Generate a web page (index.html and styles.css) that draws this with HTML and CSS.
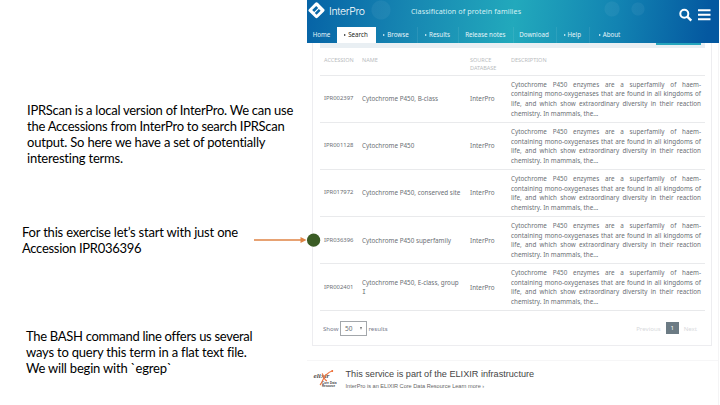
FILE: index.html
```
<!DOCTYPE html>
<html lang="en">
<head>
<meta charset="utf-8">
<title>InterPro accessions</title>
<link rel="stylesheet" href="styles.css">
</head>
<body>
<main class="slide">
  <section class="notes">
    <p class="note intro"><span class="tight">IPRScan is a local version of InterPro. We can use</span><br><span class="tight">the Accessions from InterPro to search IPRScan</span><br>output. So here we have a set of potentially<br>interesting terms.</p>
    <p class="note exercise">For this exercise let’s start with just one<br><span class="tighter">Accession IPR036396</span></p>
    <p class="note command"><span class="tighter">The BASH command line offers us several</span><br>ways to query this term in a flat text file.<br>We will begin with `egrep`</p>
  </section>
  <section class="site">
    <header class="masthead">
      <div class="brand-row">
        <svg class="logo" viewBox="0 0 17 17"><path fill="#fff" fill-rule="evenodd" d="M8.5 0.3Q9.2 0.3 10 1.1L16 7Q17.2 8.2 16 9.4L9.8 15.6Q8.5 16.8 7.2 15.6L1 9.6Q-.2 8.5 1 7.2L7.1 1.1Q7.8.3 8.5.3ZM8.2 4L4.2 8L6.2 10L10.2 6ZM10.8 7L6.8 11L8.6 12.8L12.6 8.8Z"/></svg>
        <span class="brand">InterPro</span>
        <span class="tagline">Classification of protein families</span>
        <svg class="tools" viewBox="0 0 32 14"><circle cx="5.3" cy="5.7" r="4" fill="none" stroke="#fff" stroke-width="2"/><path d="M8.3 8.7L12.3 12.7" stroke="#fff" stroke-width="2.4"/><path d="M19 2.3H31.5M19 6.8H31.5M19 11.3H31.5" stroke="#fff" stroke-width="2"/></svg>
      </div>
      <nav class="nav">
        <a>Home</a><a class="sub active">Search</a><a class="sub">Browse</a><a class="sub">Results</a><a>Release notes</a><a>Download</a><a class="sub">Help</a><a class="sub">About</a>
      </nav>
    </header>
    <div class="card">
      <div class="toolbar"><i class="export"></i></div>
      <div class="row head"><span>ACCESSION</span><span>NAME</span><span>SOURCE<br>DATABASE</span><span>DESCRIPTION</span></div>
      <div class="row"><span class="acc">IPR002397</span><span>Cytochrome P450, B-class</span><span>InterPro</span><div class="desc"><p>Cytochrome P450 enzymes are a superfamily of haem-</p><p>containing mono-oxygenases that are found in all kingdoms of</p><p>life, and which show extraordinary diversity in their reaction</p><p>chemistry. In mammals, the...</p></div></div>
      <div class="row"><span class="acc">IPR001128</span><span>Cytochrome P450</span><span>InterPro</span><div class="desc"><p>Cytochrome P450 enzymes are a superfamily of haem-</p><p>containing mono-oxygenases that are found in all kingdoms of</p><p>life, and which show extraordinary diversity in their reaction</p><p>chemistry. In mammals, the...</p></div></div>
      <div class="row"><span class="acc">IPR017972</span><span>Cytochrome P450, conserved site</span><span>InterPro</span><div class="desc"><p>Cytochrome P450 enzymes are a superfamily of haem-</p><p>containing mono-oxygenases that are found in all kingdoms of</p><p>life, and which show extraordinary diversity in their reaction</p><p>chemistry. In mammals, the...</p></div></div>
      <div class="row"><span class="acc">IPR036396</span><span>Cytochrome P450 superfamily</span><span>InterPro</span><div class="desc"><p>Cytochrome P450 enzymes are a superfamily of haem-</p><p>containing mono-oxygenases that are found in all kingdoms of</p><p>life, and which show extraordinary diversity in their reaction</p><p>chemistry. In mammals, the...</p></div></div>
      <div class="row last"><span class="acc">IPR002401</span><span>Cytochrome P450, E-class, group<br><b class="serif-i">I</b></span><span>InterPro</span><div class="desc"><p>Cytochrome P450 enzymes are a superfamily of haem-</p><p>containing mono-oxygenases that are found in all kingdoms of</p><p>life, and which show extraordinary diversity in their reaction</p><p>chemistry. In mammals, the...</p></div></div>
      <div class="pager">
        <span class="show">Show</span><span class="select">50<i></i></span><span class="show">results</span>
        <span class="step prev">Previous</span><span class="page">1</span><span class="step">Next</span>
      </div>
    </div>
    <footer class="elixir">
      <svg class="elixir-logo" viewBox="0 0 24 19"><text x="0.5" y="9.3" class="word" textLength="16" lengthAdjust="spacingAndGlyphs">elixir</text><path d="M7 16C9 14 10 9 13 6S17 2.5 19 2M9 4.5C11 6 10.5 11 14 12" fill="none" stroke="#ed7542" stroke-width="1.1"/><circle cx="19.3" cy="2" r="0.9" fill="#ed6428"/><text x="9" y="15.3" class="tiny" textLength="14.5">Core Data</text><text x="9" y="18" class="tiny" textLength="13">Resource</text></svg>
      <div><h2>This service is part of the ELIXIR infrastructure</h2><p>InterPro is an ELIXIR Core Data Resource Learn more ›</p></div>
    </footer>
  </section>
  <svg class="pointer" viewBox="0 0 68 14"><path d="M0 7H48" stroke="#df8344" stroke-width="1.7"/><path d="M46.5 4L52.5 7L46.5 10Z" fill="#df8344"/><circle cx="59.6" cy="7.2" r="6.6" fill="#3b5c25"/></svg>
</main>
</body>
</html>
```
FILE: styles.css
```
* { box-sizing: border-box; }
body { margin: 0; background: #fff; }
p, h2 { margin: 0; }
.slide { position: relative; display: flex; width: 720px; height: 405px; overflow: hidden; }
.notes { width: 307px; flex: none; }
.note { font: 13px/16px Lato, sans-serif; color: #000; white-space: nowrap; letter-spacing: -.2px; }
.tight { letter-spacing: -.26px; }
.tighter { letter-spacing: -.3px; }
.intro { margin: 101.5px 0 0 27px; }
.exercise { margin: 58.5px 0 0 22px; }
.command { margin: 72px 0 0 26px; }

.site { width: 412px; flex: none; font-family: "Noto Sans", sans-serif; border-right: 1px solid #f4f4f5; }
.masthead { height: 43px; width: 412px; color: #fff; display: flex; flex-direction: column; justify-content: space-between;
  background:
    radial-gradient(circle at 74px 10px, rgba(255,255,255,.05) 9px, transparent 10px),
    radial-gradient(circle at 305px 9px, rgba(255,255,255,.05) 7px, transparent 8px),
    radial-gradient(circle at 331px 9px, rgba(255,255,255,.05) 6px, transparent 7px),
    linear-gradient(97deg, #0663a6 0, #1787b2 25%, #22a9bc 50%, #1283b2 75%, #0458a0 97%); }
.brand-row { height: 27px; display: flex; align-items: flex-start; padding: 2px 8px 0 1px; }
.logo { width: 17px; height: 17px; }
.brand { width: 86px; padding-left: 4px; font-size: 10.5px; line-height: 19px; letter-spacing: -.35px; transform: none; font-family: Inter, sans-serif; font-weight: 300; }
.tagline { font-size: 7.2px; line-height: 18px; letter-spacing: .08px; color: #d6f1f5; white-space: nowrap; }
.tools { width: 32px; height: 14px; margin: 6px 0 0 auto; }
.nav { display: grid; grid-template-columns: 30px 39px 42px 41px 54.5px 43px 33.5px 40px; height: 16px; }
.nav a { display: flex; align-items: center; justify-content: center; font-size: 6.2px; line-height: 16px; white-space: nowrap; border-right: 1px solid rgba(255,255,255,.08); color: #e5f5fa; padding-right: 1px; }
.nav a:first-child, .nav a:last-child { border: 0; }
.nav .sub::before { content: ""; border: 1.5px solid transparent; border-left: 2px solid currentColor; border-right: 0; margin-right: 2px; }
.nav .active { background: #fff; color: #222; padding-right: 0; }

.card { margin-left: 5px; width: 400px; height: 303px; padding: 0 7px; border: solid #ededf0; border-width: 0 1px 1px; color: #6b6f75; font-size: 6.32px; line-height: 9.6px; }
.toolbar { height: 5px; background: #e9eff3; display: flex; justify-content: flex-end; padding-right: 4px; width: 385px; }
.export { width: 45px; height: 2px; background: #25a5bd; }
.row { display: grid; grid-template-columns: 38px 108px 41px 190px; align-items: center; padding-left: 4px; height: 47.1px; border-bottom: 1px solid #e9eaec; white-space: nowrap; width: 385px; }
.head { height: 28px; align-items: start; padding-top: 7.5px; line-height: 8px; font-size: 5.5px; color: #b9bcc0; }
.last { border-bottom: 1.5px solid #e8e9eb; }
.acc { font-size: 5.9px; }
.desc { font-size: 6.3px; }
.desc p { text-align: justify; text-align-last: justify; }
.desc p:last-child { text-align-last: left; }
.serif-i { font: 6.5px "Liberation Mono", monospace; }
.pager { display: flex; align-items: center; height: 34px; padding: 0 7px 0 3px; font-size: 6.1px; }
.show { color: #777b8c; }
.select { width: 27px; height: 15px; border: 1px solid #a3a7ab; margin: 0 1.5px; padding: 0 4px; display: flex; align-items: center; justify-content: space-between; font-size: 6.5px; }
.select i { border: 1.8px solid transparent; border-top: 3px solid #777; border-bottom: 0; }
.step { color: #d7d9dc; }
.prev { margin-left: auto; }
.page { width: 13px; height: 12px; margin: 0 5px; background: #6c7b84; color: #fff; text-align: center; line-height: 12px; }
.elixir { margin-top: 14px; height: 45px; border-top: 1px solid #f6f6f7; display: flex; padding: 8px 0 0 6px; }
.elixir-logo { width: 24px; height: 19px; margin-right: 8.5px; }
.word { font: italic bold 7px "Liberation Serif", serif; fill: #55524f; }
.tiny { font: bold 2.8px "Liberation Sans", sans-serif; fill: #333; }
.elixir h2 { font: 9.14px/11px "Liberation Sans", sans-serif; color: #454545; white-space: nowrap; }
.elixir p { font: 5.6px/7px "Liberation Sans", sans-serif; color: #666; margin-top: 3px; white-space: nowrap; }
.pointer { position: absolute; left: 254px; top: 233px; width: 68px; height: 14px; }
```
